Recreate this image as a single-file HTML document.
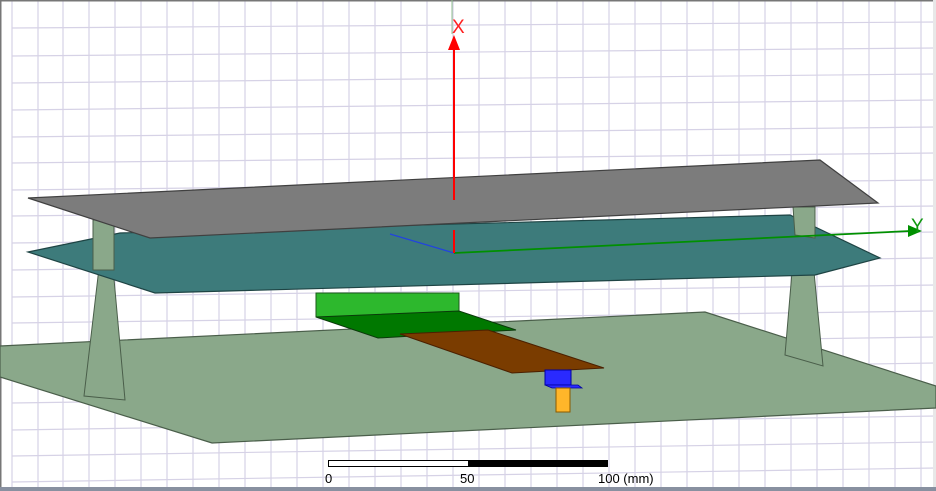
<!DOCTYPE html>
<html><head><style>
html,body{margin:0;padding:0;background:#fff;}
svg{display:block;font-family:"Liberation Sans",sans-serif;}
</style></head><body>
<svg width="936" height="491" viewBox="0 0 936 491" xmlns="http://www.w3.org/2000/svg">
<rect width="936" height="491" fill="#fff"/>
<g stroke="#d6d2e6" stroke-width="1.2">
<line x1="12" y1="0" x2="12" y2="491"/><line x1="38" y1="0" x2="38" y2="491"/><line x1="63" y1="0" x2="63" y2="491"/><line x1="89" y1="0" x2="89" y2="491"/><line x1="115" y1="0" x2="115" y2="491"/><line x1="141" y1="0" x2="141" y2="491"/><line x1="167" y1="0" x2="167" y2="491"/><line x1="193" y1="0" x2="193" y2="491"/><line x1="219" y1="0" x2="219" y2="491"/><line x1="245" y1="0" x2="245" y2="491"/><line x1="271" y1="0" x2="271" y2="491"/><line x1="297" y1="0" x2="297" y2="491"/><line x1="323" y1="0" x2="323" y2="491"/><line x1="349" y1="0" x2="349" y2="491"/><line x1="375" y1="0" x2="375" y2="491"/><line x1="401" y1="0" x2="401" y2="491"/><line x1="427" y1="0" x2="427" y2="491"/><line x1="453" y1="0" x2="453" y2="491"/><line x1="479" y1="0" x2="479" y2="491"/><line x1="505" y1="0" x2="505" y2="491"/><line x1="531" y1="0" x2="531" y2="491"/><line x1="557" y1="0" x2="557" y2="491"/><line x1="583" y1="0" x2="583" y2="491"/><line x1="609" y1="0" x2="609" y2="491"/><line x1="635" y1="0" x2="635" y2="491"/><line x1="661" y1="0" x2="661" y2="491"/><line x1="687" y1="0" x2="687" y2="491"/><line x1="713" y1="0" x2="713" y2="491"/><line x1="739" y1="0" x2="739" y2="491"/><line x1="765" y1="0" x2="765" y2="491"/><line x1="791" y1="0" x2="791" y2="491"/><line x1="817" y1="0" x2="817" y2="491"/><line x1="843" y1="0" x2="843" y2="491"/><line x1="869" y1="0" x2="869" y2="491"/><line x1="895" y1="0" x2="895" y2="491"/><line x1="921" y1="0" x2="921" y2="491"/>
<line x1="12" y1="28" x2="936" y2="22"/><line x1="12" y1="56" x2="936" y2="48"/><line x1="12" y1="83" x2="936" y2="74"/><line x1="12" y1="110" x2="936" y2="100"/><line x1="12" y1="137" x2="936" y2="127"/><line x1="12" y1="163" x2="936" y2="153"/><line x1="12" y1="190" x2="936" y2="180"/><line x1="12" y1="216" x2="936" y2="206"/><line x1="12" y1="243" x2="936" y2="232"/><line x1="12" y1="270" x2="936" y2="258"/><line x1="12" y1="297" x2="936" y2="285"/><line x1="12" y1="323" x2="936" y2="311"/><line x1="12" y1="350" x2="936" y2="337"/><line x1="12" y1="377" x2="936" y2="363"/><line x1="12" y1="403" x2="936" y2="390"/><line x1="12" y1="430" x2="936" y2="416"/><line x1="12" y1="456" x2="936" y2="442"/><line x1="12" y1="482" x2="936" y2="468"/>
</g>
<rect x="0" y="0" width="936" height="1.5" fill="#777"/>
<rect x="0" y="0" width="1.5" height="491" fill="#777"/>
<rect x="933" y="0" width="3" height="491" fill="#e8e8e8"/>
<polygon points="0,346 705,312 936,386 936,408 212,443 0,377" fill="#8aa88a" stroke="#4a5e4a" stroke-width="1.2"/>
<polygon points="99,268 113,268 125,400 84,396" fill="#8aa88a" stroke="#4a5e4a" stroke-width="1"/>
<polygon points="792,272 814,272 823,366 785,355" fill="#8aa88a" stroke="#4a5e4a" stroke-width="1"/>
<rect x="316" y="293" width="143" height="24" fill="#2db82d" stroke="#1a5a1a" stroke-width="1"/>
<polygon points="316,317 459,311 516,330 378,338" fill="#007800" stroke="#0a3a0a" stroke-width="1"/>
<polygon points="400,334 488,330 604,368 512,373" fill="#7a3c00" stroke="#4a2000" stroke-width="1"/>
<rect x="545" y="370" width="26" height="15" fill="#2a2aff" stroke="#0000a0" stroke-width="1"/>
<polygon points="545,385 578,385 582,388 552,388" fill="#2a2aff" stroke="#0000a0" stroke-width="0.8"/>
<rect x="556" y="388" width="14" height="24" fill="#ffb62a" stroke="#8a5a00" stroke-width="1"/>
<polygon points="28,252 120,233 790,215 880,258 815,275 155,293" fill="#3d7b7b" stroke="#1e4444" stroke-width="1.2"/>
<line x1="454" y1="253" x2="390" y2="234" stroke="#2244dd" stroke-width="1.2"/>
<rect x="93" y="220" width="21" height="50" fill="#8aa88a" stroke="#4a5e4a" stroke-width="1"/>
<polygon points="793,207 815,207 815,238 795,235" fill="#8aa88a" stroke="#4a5e4a" stroke-width="1"/>
<line x1="454" y1="253" x2="910" y2="231" stroke="#009000" stroke-width="1.8"/>
<polygon points="908,225 922,231 908,237" fill="#009000"/>
<text x="911" y="232" font-size="19" fill="#109810">Y</text>
<polygon points="28,198 820,160 878,203 150,238" fill="#7c7c7c" stroke="#404040" stroke-width="1.2"/>
<line x1="454" y1="48" x2="454" y2="200" stroke="#ff0000" stroke-width="2"/>
<line x1="454" y1="230" x2="454" y2="253" stroke="#ff0000" stroke-width="2"/>
<polygon points="448,50 454,35 460,50" fill="#ff0000"/>
<line x1="452" y1="0" x2="452" y2="34" stroke="#90c090" stroke-width="1"/>
<text x="452" y="33" font-size="19" fill="#ff2020">X</text>
<rect x="328.5" y="460.5" width="140" height="6" fill="#fff" stroke="#000" stroke-width="1"/>
<rect x="468" y="460" width="140" height="7" fill="#000"/>
<g font-size="13" fill="#000">
<text x="325" y="483">0</text><text x="460" y="483">50</text><text x="598" y="483">100 (mm)</text>
</g>
<rect x="0" y="487" width="936" height="4" fill="#8890a0"/>
</svg>
</body></html>
